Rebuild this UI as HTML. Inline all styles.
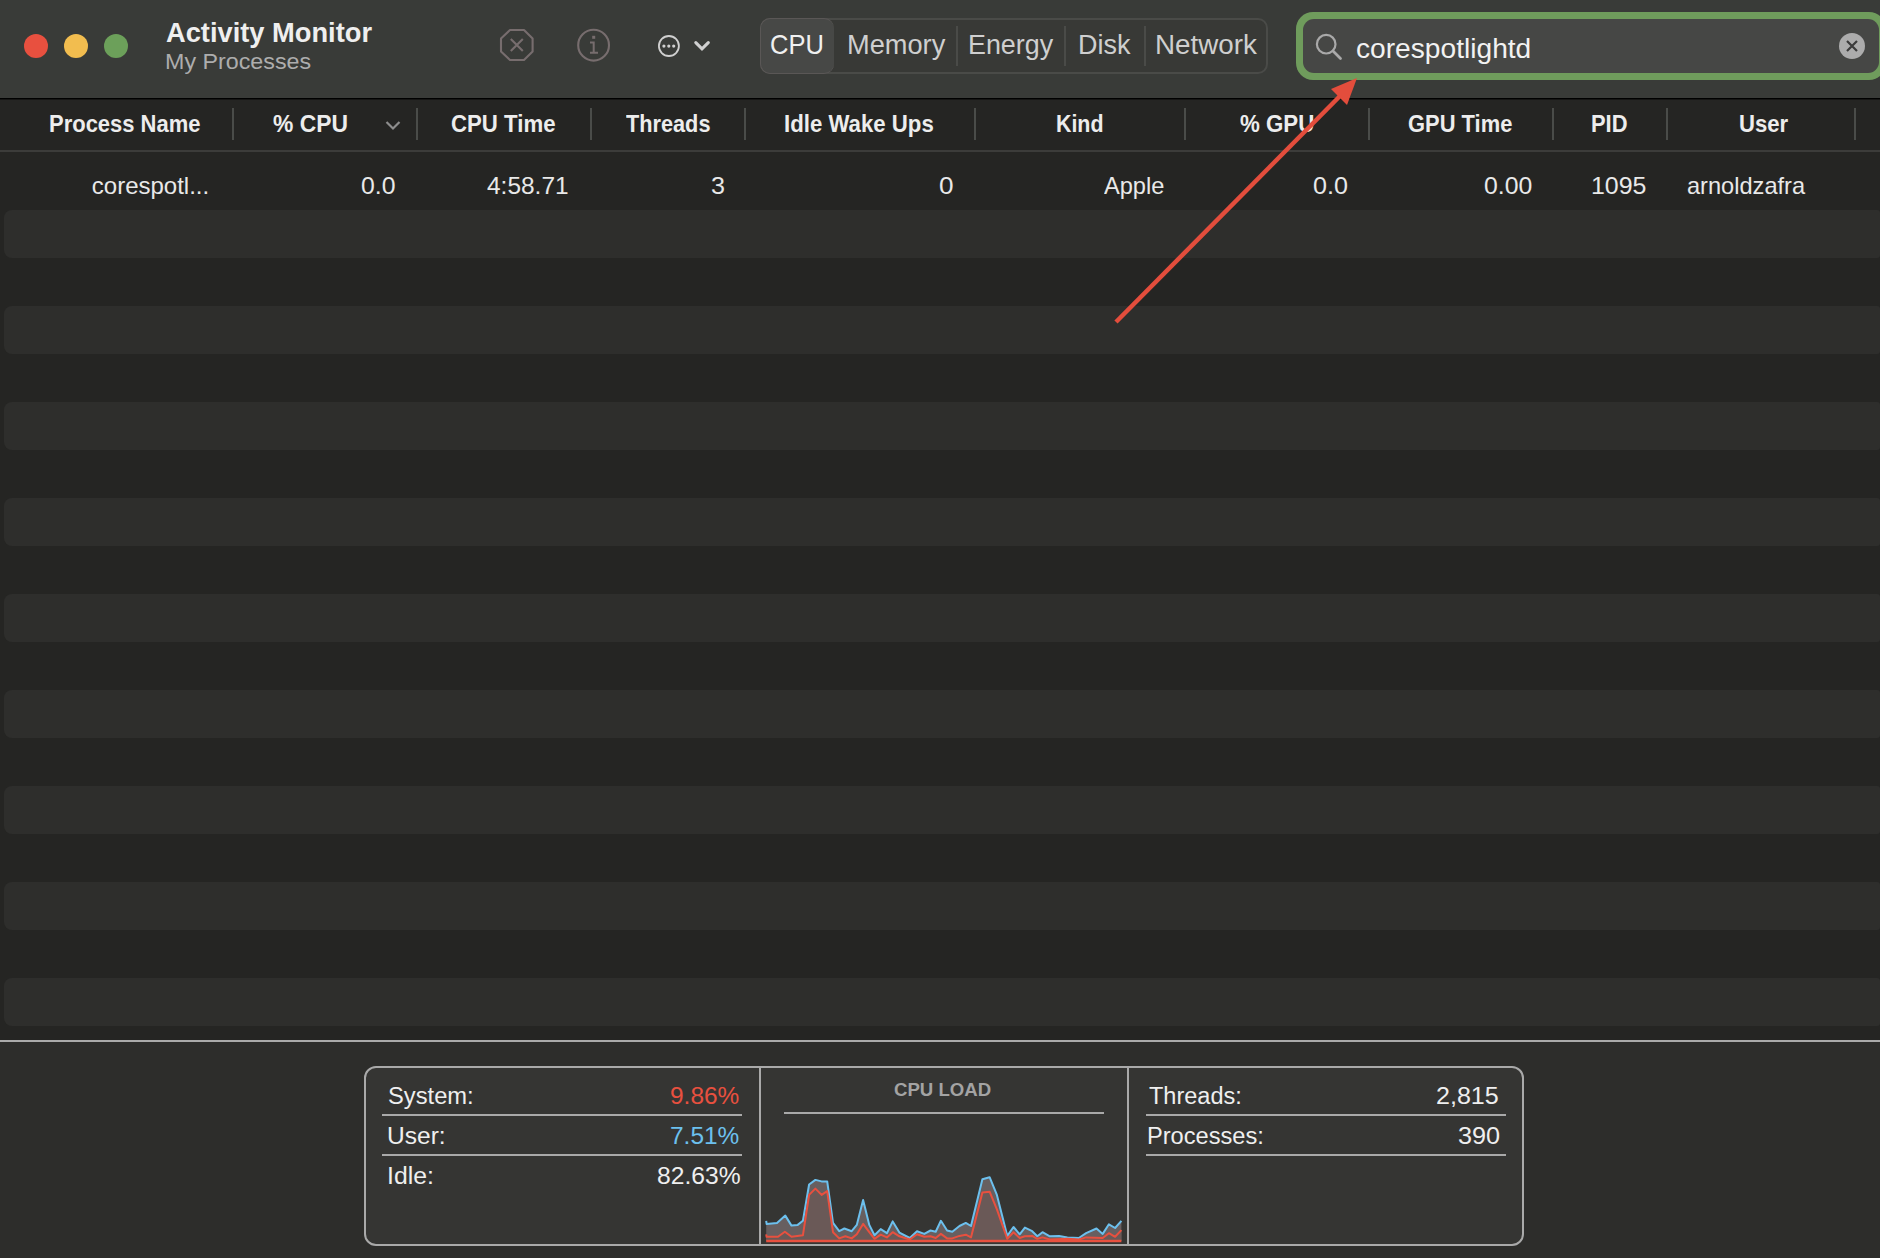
<!DOCTYPE html>
<html><head><meta charset="utf-8">
<style>
html,body{margin:0;padding:0;}
body{width:1880px;height:1258px;position:relative;overflow:hidden;background:#252523;font-family:"Liberation Sans",sans-serif;}
.t{position:absolute;white-space:nowrap;transform-origin:0 0;}
#toolbar{position:absolute;left:0;top:0;width:1880px;height:98px;background:#393b38;}
#tbline{position:absolute;left:0;top:98px;width:1880px;height:1px;background:#000;border-bottom:1px solid #151514;}
.light{position:absolute;width:24px;height:24px;border-radius:50%;top:34px;}
#seg{position:absolute;left:760px;top:18px;width:505px;height:54px;border:2px solid #4a4b48;border-radius:10px;background:#383936;box-sizing:border-box;width:508px;height:56px;}
#segsel{position:absolute;left:760px;top:18px;width:74px;height:56px;border-radius:10px;background:#474846;box-sizing:border-box;border:1.5px solid #5a5756;border-right:none;}
.ssep{position:absolute;top:26px;width:2px;height:40px;background:#4a4b48;}
#sfo{position:absolute;left:1296px;top:12px;width:590px;height:68px;border-radius:17px;background:#6f9c5c;}
#sfi{position:absolute;left:1303px;top:19px;width:576px;height:54px;border-radius:11px;background:#464745;}
.band{position:absolute;left:4px;width:1876px;height:48px;border-radius:8px 3px 3px 8px;background:#2e2e2c;}
.csep{position:absolute;top:108px;width:2px;height:32px;background:#4a4c49;}
#hline{position:absolute;left:0;top:150px;width:1880px;height:2px;background:#3c3c3a;}
#bline{position:absolute;left:0;top:1040px;width:1880px;height:2px;background:#aaaaaa;}
#bpanel{position:absolute;left:0;top:1042px;width:1880px;height:216px;background:#2d2d2b;}
#box{position:absolute;left:364px;top:1066px;width:1160px;height:180px;border:2px solid #a9a9a9;border-radius:12px;background:#353533;box-sizing:border-box;}
.vdiv{position:absolute;top:1067px;width:2px;height:178px;background:#a9a9a9;}
.hdiv{position:absolute;height:2px;background:#a9a9a9;}
</style></head><body>
<div id="toolbar"></div>
<div id="tbline"></div>
<div class="light" style="left:24px;background:#e8503f"></div>
<div class="light" style="left:64px;background:#f2bd4f"></div>
<div class="light" style="left:104px;background:#6ca05a"></div>
<svg style="position:absolute;left:0;top:0" width="760" height="98">
 <polygon points="510,30 524,30 532.6,38.6 532.6,51.4 524,60 510,60 501,51.4 501,38.6" fill="none" stroke="#776d6e" stroke-width="2.1" stroke-linejoin="round"/>
 <path d="M510.8,39 L522.8,51 M522.8,39 L510.8,51" stroke="#776d6e" stroke-width="2.1"/>
 <circle cx="593.6" cy="45.2" r="15.4" fill="none" stroke="#776d6e" stroke-width="2.1"/>
 <rect x="592.2" y="35.8" width="3" height="3" fill="#776d6e"/>
 <path d="M593.7,42 L593.7,53 M590,42.6 L594.7,42.6 M590,52.8 L598,52.8" stroke="#776d6e" stroke-width="2"/>
 <circle cx="668.9" cy="46" r="10" fill="none" stroke="#d0d0d0" stroke-width="1.8"/>
 <circle cx="663.9" cy="46.1" r="1.6" fill="#d0d0d0"/><circle cx="668.8" cy="46.1" r="1.6" fill="#d0d0d0"/><circle cx="673.7" cy="46.1" r="1.6" fill="#d0d0d0"/>
 <path d="M695.8,42.6 L702,48.8 L708.3,42.6" fill="none" stroke="#d0d0d0" stroke-width="3.1" stroke-linecap="round" stroke-linejoin="miter"/>
</svg>
<div id="seg"></div>
<div id="segsel"></div>
<div class="ssep" style="left:956px"></div>
<div class="ssep" style="left:1064px"></div>
<div class="ssep" style="left:1144px"></div>
<div id="sfo"></div>
<div id="sfi"></div>
<svg style="position:absolute;left:1300px;top:10px" width="580" height="80">
 <circle cx="26.2" cy="34.2" r="9.3" fill="none" stroke="#a9a9a9" stroke-width="2.2"/>
 <path d="M33,41 L40.5,48.5" stroke="#a9a9a9" stroke-width="2.8" stroke-linecap="round"/>
 <circle cx="552" cy="36" r="13" fill="#acacac"/>
 <path d="M547,31 L557,41 M557,31 L547,41" stroke="#3b3b3b" stroke-width="2.2"/>
</svg>
<div class="band" style="top:210px"></div>
<div class="band" style="top:306px"></div>
<div class="band" style="top:402px"></div>
<div class="band" style="top:498px"></div>
<div class="band" style="top:594px"></div>
<div class="band" style="top:690px"></div>
<div class="band" style="top:786px"></div>
<div class="band" style="top:882px"></div>
<div class="band" style="top:978px"></div>
<div id="hline"></div>
<div class="csep" style="left:232px"></div>
<div class="csep" style="left:416px"></div>
<div class="csep" style="left:590px"></div>
<div class="csep" style="left:744px"></div>
<div class="csep" style="left:974px"></div>
<div class="csep" style="left:1184px"></div>
<div class="csep" style="left:1368px"></div>
<div class="csep" style="left:1552px"></div>
<div class="csep" style="left:1666px"></div>
<div class="csep" style="left:1854px"></div>
<svg style="position:absolute;left:380px;top:118px" width="30" height="20"><path d="M6.5,4 L13,10.5 L19.5,4" fill="none" stroke="#8d8d8d" stroke-width="2.2"/></svg>
<div id="bline"></div>
<div id="bpanel"></div>
<div id="box"></div>
<div class="vdiv" style="left:759px"></div>
<div class="vdiv" style="left:1127px"></div>
<div class="hdiv" style="left:382px;top:1114px;width:360px"></div>
<div class="hdiv" style="left:382px;top:1154px;width:360px"></div>
<div class="hdiv" style="left:784px;top:1112px;width:320px"></div>
<div class="hdiv" style="left:1146px;top:1114px;width:360px"></div>
<div class="hdiv" style="left:1146px;top:1154px;width:360px"></div>
<svg style="position:absolute;left:0;top:0;pointer-events:none" width="1880" height="1258">
 <polygon points="766.2,1220.8 766.6,1223.9 777.0,1222.9 785.3,1215.6 791.5,1225.6 797.7,1224.9 802.9,1220.8 809.1,1184.5 815.4,1179.9 821.6,1181.4 827.2,1181.4 833.0,1222.9 839.2,1231.2 844.4,1228.5 851.7,1231.2 856.8,1224.9 863.1,1200.0 869.3,1224.9 874.5,1235.3 880.7,1229.1 886.9,1233.2 892.7,1221.4 899.4,1232.6 909.8,1238.0 917.0,1231.2 924.3,1233.9 930.5,1230.5 935.7,1231.8 940.9,1220.8 947.1,1230.5 952.3,1231.8 959.5,1226.0 965.8,1222.9 971.0,1226.0 982.4,1179.3 989.6,1177.2 996.9,1194.9 1007.3,1235.9 1013.5,1227.0 1019.7,1234.3 1024.9,1227.6 1032.2,1231.2 1037.3,1236.3 1042.5,1232.2 1049.8,1236.3 1059.1,1235.9 1067.4,1237.4 1078.8,1238.0 1086.1,1233.2 1096.5,1228.5 1102.7,1233.9 1108.9,1224.3 1115.1,1228.0 1121.4,1220.8 1121.4,1240.9 766.2,1240.9" fill="#675f60"/>
 <polygon points="766.2,1234.3 766.6,1236.8 778.0,1236.8 784.9,1231.8 791.5,1236.8 802.9,1235.3 809.1,1194.9 815.4,1188.6 821.6,1194.9 827.2,1191.1 833.0,1232.2 839.2,1238.4 845.4,1236.3 851.7,1238.4 856.8,1234.3 863.1,1223.9 869.3,1232.2 874.5,1238.8 880.7,1234.7 886.9,1237.4 892.7,1232.2 899.4,1236.3 909.8,1239.5 917.0,1234.3 924.3,1236.8 930.5,1236.3 935.7,1238.0 940.9,1233.9 947.1,1238.4 952.3,1238.4 959.5,1235.9 965.8,1234.7 971.0,1237.4 982.4,1192.4 989.6,1191.7 996.9,1209.4 1007.3,1238.8 1013.5,1232.2 1019.7,1238.0 1024.9,1236.3 1032.2,1235.9 1037.3,1238.8 1042.5,1237.4 1049.8,1239.5 1067.4,1238.8 1078.8,1239.5 1086.1,1237.4 1102.7,1238.0 1108.9,1233.2 1115.1,1236.8 1121.4,1230.1 1121.4,1240.9 766.2,1240.9" fill="#6a5957"/>
 <polyline points="766.2,1220.8 766.6,1223.9 777.0,1222.9 785.3,1215.6 791.5,1225.6 797.7,1224.9 802.9,1220.8 809.1,1184.5 815.4,1179.9 821.6,1181.4 827.2,1181.4 833.0,1222.9 839.2,1231.2 844.4,1228.5 851.7,1231.2 856.8,1224.9 863.1,1200.0 869.3,1224.9 874.5,1235.3 880.7,1229.1 886.9,1233.2 892.7,1221.4 899.4,1232.6 909.8,1238.0 917.0,1231.2 924.3,1233.9 930.5,1230.5 935.7,1231.8 940.9,1220.8 947.1,1230.5 952.3,1231.8 959.5,1226.0 965.8,1222.9 971.0,1226.0 982.4,1179.3 989.6,1177.2 996.9,1194.9 1007.3,1235.9 1013.5,1227.0 1019.7,1234.3 1024.9,1227.6 1032.2,1231.2 1037.3,1236.3 1042.5,1232.2 1049.8,1236.3 1059.1,1235.9 1067.4,1237.4 1078.8,1238.0 1086.1,1233.2 1096.5,1228.5 1102.7,1233.9 1108.9,1224.3 1115.1,1228.0 1121.4,1220.8" fill="none" stroke="#6cc0ee" stroke-width="2" stroke-linejoin="round"/>
 <polyline points="766.2,1234.3 766.6,1236.8 778.0,1236.8 784.9,1231.8 791.5,1236.8 802.9,1235.3 809.1,1194.9 815.4,1188.6 821.6,1194.9 827.2,1191.1 833.0,1232.2 839.2,1238.4 845.4,1236.3 851.7,1238.4 856.8,1234.3 863.1,1223.9 869.3,1232.2 874.5,1238.8 880.7,1234.7 886.9,1237.4 892.7,1232.2 899.4,1236.3 909.8,1239.5 917.0,1234.3 924.3,1236.8 930.5,1236.3 935.7,1238.0 940.9,1233.9 947.1,1238.4 952.3,1238.4 959.5,1235.9 965.8,1234.7 971.0,1237.4 982.4,1192.4 989.6,1191.7 996.9,1209.4 1007.3,1238.8 1013.5,1232.2 1019.7,1238.0 1024.9,1236.3 1032.2,1235.9 1037.3,1238.8 1042.5,1237.4 1049.8,1239.5 1067.4,1238.8 1078.8,1239.5 1086.1,1237.4 1102.7,1238.0 1108.9,1233.2 1115.1,1236.8 1121.4,1230.1" fill="none" stroke="#e8503f" stroke-width="2" stroke-linejoin="round"/>
 <line x1="766.2" y1="1240.9" x2="1121.4" y2="1240.9" stroke="#e8503f" stroke-width="2.5"/>
</svg>
<div id="title" class="t" style="left:165.99px;top:20.14px;font-size:27px;line-height:27px;font-weight:700;color:#efefef;transform:scaleX(1.0099)">Activity Monitor</div>
<div id="sub" class="t" style="left:164.88px;top:50.88px;font-size:22px;line-height:22px;font-weight:400;color:#adadad;transform:scaleX(1.0575)">My Processes</div>
<div id="seg1" class="t" style="left:770.07px;top:30.72px;font-size:27.5px;line-height:27.5px;font-weight:400;color:#f0f0f0;transform:scaleX(0.9273)">CPU</div>
<div id="seg2" class="t" style="left:847.02px;top:30.72px;font-size:27.5px;line-height:27.5px;font-weight:400;color:#cfcfcf;transform:scaleX(0.9897)">Memory</div>
<div id="seg3" class="t" style="left:968.05px;top:30.72px;font-size:27.5px;line-height:27.5px;font-weight:400;color:#cfcfcf;transform:scaleX(0.9765)">Energy</div>
<div id="seg4" class="t" style="left:1078.04px;top:30.72px;font-size:27.5px;line-height:27.5px;font-weight:400;color:#cfcfcf;transform:scaleX(0.9808)">Disk</div>
<div id="seg5" class="t" style="left:1154.98px;top:30.72px;font-size:27.5px;line-height:27.5px;font-weight:400;color:#cfcfcf;transform:scaleX(1.0101)">Network</div>
<div id="search" class="t" style="left:1355.98px;top:34.72px;font-size:27.5px;line-height:27.5px;font-weight:400;color:#f2f2f2;transform:scaleX(1.0237)">corespotlightd</div>
<div id="h1" class="t" style="left:49.06px;top:113.19px;font-size:23.4px;line-height:23.4px;font-weight:700;color:#ededed;transform:scaleX(0.9394)">Process Name</div>
<div id="h2" class="t" style="left:273.22px;top:113.19px;font-size:23.4px;line-height:23.4px;font-weight:700;color:#ededed;transform:scaleX(0.9770)">% CPU</div>
<div id="h3" class="t" style="left:450.84px;top:113.19px;font-size:23.4px;line-height:23.4px;font-weight:700;color:#ededed;transform:scaleX(0.9496)">CPU Time</div>
<div id="h4" class="t" style="left:626.16px;top:113.19px;font-size:23.4px;line-height:23.4px;font-weight:700;color:#ededed;transform:scaleX(0.9281)">Threads</div>
<div id="h5" class="t" style="left:784.08px;top:113.19px;font-size:23.4px;line-height:23.4px;font-weight:700;color:#ededed;transform:scaleX(0.9495)">Idle Wake Ups</div>
<div id="h6" class="t" style="left:1056.38px;top:113.19px;font-size:23.4px;line-height:23.4px;font-weight:700;color:#ededed;transform:scaleX(0.9136)">Kind</div>
<div id="h7" class="t" style="left:1240.00px;top:113.19px;font-size:23.4px;line-height:23.4px;font-weight:700;color:#ededed;transform:scaleX(0.9528)">% GPU</div>
<div id="h8" class="t" style="left:1408.22px;top:113.19px;font-size:23.4px;line-height:23.4px;font-weight:700;color:#ededed;transform:scaleX(0.9368)">GPU Time</div>
<div id="h9" class="t" style="left:1590.92px;top:113.19px;font-size:23.4px;line-height:23.4px;font-weight:700;color:#ededed;transform:scaleX(0.9365)">PID</div>
<div id="h10" class="t" style="left:1738.52px;top:113.19px;font-size:23.4px;line-height:23.4px;font-weight:700;color:#ededed;transform:scaleX(0.9450)">User</div>
<div id="d1" class="t" style="left:91.80px;top:174.18px;font-size:24px;line-height:24px;font-weight:400;color:#e9e9e9;transform:scaleX(1.0000)">corespotl...</div>
<div id="d2" class="t" style="left:360.77px;top:174.18px;font-size:24px;line-height:24px;font-weight:400;color:#e9e9e9;transform:scaleX(1.0332)">0.0</div>
<div id="d3" class="t" style="left:486.60px;top:174.18px;font-size:24px;line-height:24px;font-weight:400;color:#e9e9e9;transform:scaleX(1.0190)">4:58.71</div>
<div id="d4" class="t" style="left:710.71px;top:174.18px;font-size:24px;line-height:24px;font-weight:400;color:#e9e9e9;transform:scaleX(1.0462)">3</div>
<div id="d5" class="t" style="left:939.33px;top:174.18px;font-size:24px;line-height:24px;font-weight:400;color:#e9e9e9;transform:scaleX(1.0875)">0</div>
<div id="d6" class="t" style="left:1103.80px;top:174.18px;font-size:24px;line-height:24px;font-weight:400;color:#e9e9e9;transform:scaleX(0.9835)">Apple</div>
<div id="d7" class="t" style="left:1313.36px;top:174.18px;font-size:24px;line-height:24px;font-weight:400;color:#e9e9e9;transform:scaleX(1.0473)">0.0</div>
<div id="d8" class="t" style="left:1483.57px;top:174.18px;font-size:24px;line-height:24px;font-weight:400;color:#e9e9e9;transform:scaleX(1.0334)">0.00</div>
<div id="d9" class="t" style="left:1590.73px;top:174.18px;font-size:24px;line-height:24px;font-weight:400;color:#e9e9e9;transform:scaleX(1.0394)">1095</div>
<div id="d10" class="t" style="left:1687.22px;top:174.18px;font-size:24px;line-height:24px;font-weight:400;color:#e9e9e9;transform:scaleX(0.9832)">arnoldzafra</div>
<div id="b1" class="t" style="left:388.16px;top:1085.33px;font-size:23px;line-height:23px;font-weight:400;color:#efefef;transform:scaleX(1.0313)">System:</div>
<div id="b2" class="t" style="left:670.14px;top:1085.33px;font-size:23px;line-height:23px;font-weight:400;color:#e8503f;transform:scaleX(1.0626)">9.86%</div>
<div id="b3" class="t" style="left:387.10px;top:1125.13px;font-size:23px;line-height:23px;font-weight:400;color:#efefef;transform:scaleX(1.0676)">User:</div>
<div id="b4" class="t" style="left:670.14px;top:1125.13px;font-size:23px;line-height:23px;font-weight:400;color:#6cc0ee;transform:scaleX(1.0626)">7.51%</div>
<div id="b5" class="t" style="left:387.01px;top:1165.33px;font-size:23px;line-height:23px;font-weight:400;color:#efefef;transform:scaleX(1.0775)">Idle:</div>
<div id="b6" class="t" style="left:656.54px;top:1165.33px;font-size:23px;line-height:23px;font-weight:400;color:#efefef;transform:scaleX(1.0715)">82.63%</div>
<div id="cl" class="t" style="left:894.42px;top:1080.22px;font-size:19px;line-height:19px;font-weight:700;color:#a3a3a3;transform:scaleX(0.9797)">CPU LOAD</div>
<div id="r1" class="t" style="left:1148.59px;top:1085.33px;font-size:23px;line-height:23px;font-weight:400;color:#efefef;transform:scaleX(1.0225)">Threads:</div>
<div id="r2" class="t" style="left:1436.13px;top:1085.33px;font-size:23px;line-height:23px;font-weight:400;color:#efefef;transform:scaleX(1.0894)">2,815</div>
<div id="r3" class="t" style="left:1146.56px;top:1125.13px;font-size:23px;line-height:23px;font-weight:400;color:#efefef;transform:scaleX(1.0271)">Processes:</div>
<div id="r4" class="t" style="left:1458.06px;top:1125.13px;font-size:23px;line-height:23px;font-weight:400;color:#efefef;transform:scaleX(1.0978)">390</div>
<svg style="position:absolute;left:0;top:0;pointer-events:none" width="1880" height="1258">
 <line x1="1116" y1="322" x2="1340" y2="96" stroke="#e34d3c" stroke-width="4.5"/>
 <polygon points="1357,78 1331,89 1347,105" fill="#e34d3c"/>
</svg>
</body></html>
